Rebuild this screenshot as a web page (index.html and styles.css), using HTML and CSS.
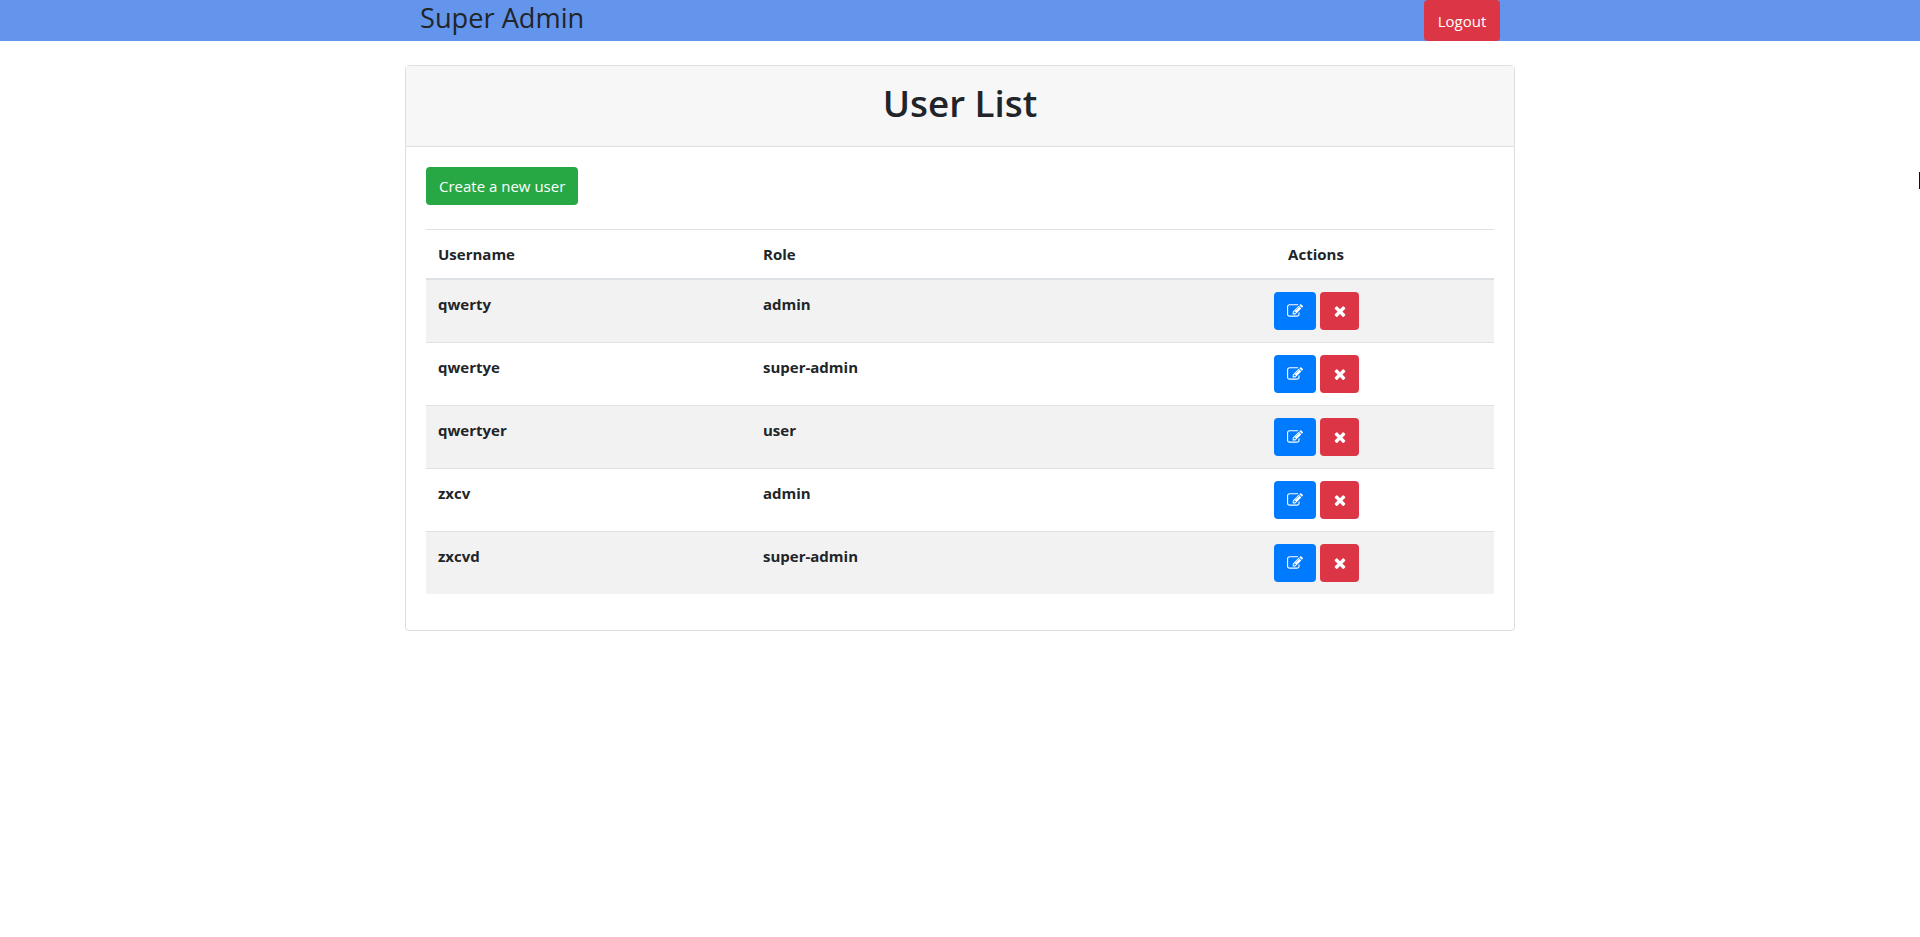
FILE: index.html
```html
<!DOCTYPE html>
<html lang="en">
<head>
  <meta charset="UTF-8" />
  <title>Super Admin</title>
  <link rel="stylesheet" href="styles.css">
</head>
<body>

  <nav class="navbar">
    <div class="navbarInner">
      <span class="brand">Super Admin</span>
      <button class="btn btnRed btnLogout">Logout</button>
    </div>
  </nav>

  <main class="container">
    <section class="card">
      <header class="cardHeader">
        <h1>User List</h1>
      </header>
      <div class="cardBody">
        <button class="btn btnGreen">Create a new user</button>
        <table class="userTable">
          <thead>
            <tr>
              <th class="colName">Username</th>
              <th class="colRole">Role</th>
              <th class="colActions">Actions</th>
            </tr>
          </thead>
          <tbody>
            <tr>
              <td>qwerty</td>
              <td>admin</td>
              <td class="colActions">
                <button class="btn btnBlue btnEdit"><svg viewBox="0 0 1792 1792"><use href="#iconEdit"/></svg></button>
                <button class="btn btnRed btnDelete"><svg viewBox="0 0 1792 1792"><use href="#iconClose"/></svg></button>
              </td>
            </tr>
            <tr>
              <td>qwertye</td>
              <td>super-admin</td>
              <td class="colActions">
                <button class="btn btnBlue btnEdit"><svg viewBox="0 0 1792 1792"><use href="#iconEdit"/></svg></button>
                <button class="btn btnRed btnDelete"><svg viewBox="0 0 1792 1792"><use href="#iconClose"/></svg></button>
              </td>
            </tr>
            <tr>
              <td>qwertyer</td>
              <td>user</td>
              <td class="colActions">
                <button class="btn btnBlue btnEdit"><svg viewBox="0 0 1792 1792"><use href="#iconEdit"/></svg></button>
                <button class="btn btnRed btnDelete"><svg viewBox="0 0 1792 1792"><use href="#iconClose"/></svg></button>
              </td>
            </tr>
            <tr>
              <td>zxcv</td>
              <td>admin</td>
              <td class="colActions">
                <button class="btn btnBlue btnEdit"><svg viewBox="0 0 1792 1792"><use href="#iconEdit"/></svg></button>
                <button class="btn btnRed btnDelete"><svg viewBox="0 0 1792 1792"><use href="#iconClose"/></svg></button>
              </td>
            </tr>
            <tr>
              <td>zxcvd</td>
              <td>super-admin</td>
              <td class="colActions">
                <button class="btn btnBlue btnEdit"><svg viewBox="0 0 1792 1792"><use href="#iconEdit"/></svg></button>
                <button class="btn btnRed btnDelete"><svg viewBox="0 0 1792 1792"><use href="#iconClose"/></svg></button>
              </td>
            </tr>
          </tbody>
        </table>
      </div>
    </section>
  </main>

  <div class="textCursor"></div>

  <svg class="iconDefs" aria-hidden="true">
    <symbol id="iconEdit" viewBox="0 0 1792 1792">
      <path fill="currentColor" d="M888 1184l116-116-152-152-116 116v56h96v96h56zm440-720q-16-16-33 1l-350 350q-17 17-1 33t33-1l350-350q17-17 1-33zm80 594v190q0 119-84.500 203.500t-203.500 84.500h-832q-119 0-203.500-84.500t-84.500-203.500v-832q0-119 84.500-203.500t203.500-84.500h832q63 0 117 25 15 7 18 23 3 17-9 29l-49 49q-14 14-32 8-23-6-45-6h-832q-66 0-113 47t-47 113v832q0 66 47 113t113 47h832q66 0 113-47t47-113v-126q0-13 9-22l64-64q15-15 35-7t20 29zm-96-738l288 288-672 672h-288v-288zm444 132l-92 92-288-288 92-92q28-28 68-28t68 28l152 152q28 28 28 68t-28 68z"/>
    </symbol>
    <symbol id="iconClose" viewBox="0 0 1792 1792">
      <path fill="currentColor" d="M1490 1322q0 40-28 68l-136 136q-28 28-68 28t-68-28l-294-294-294 294q-28 28-68 28t-68-28l-136-136q-28-28-28-68t28-68l294-294-294-294q-28-28-28-68t28-68l136-136q28-28 68-28t68 28l294 294 294-294q28-28 68-28t68 28l136 136q28 28 28 68t-28 68l-294 294 294 294q28 28 28 68z"/>
    </symbol>
  </svg>

</body>
</html>
```

FILE: styles.css
```css
* {
  box-sizing: border-box;
}
body {
  margin: 0;
  background-color: #fff;
  color: #212529;
  font-family: "Open Sans", "Noto Sans", sans-serif;
  font-size: 16px;
  line-height: 1.5;
}
.iconDefs {
  display: none;
}
.textCursor {
  position: fixed;
  top: 172px;
  right: 0;
  width: 1px;
  height: 17px;
  background-color: #111;
}
.navbar {
  height: 41px;
  background-color: #6495ed;
}
.navbarInner {
  width: 1140px;
  margin: 0 auto;
  padding: 0 30px;
  display: flex;
  justify-content: space-between;
}
.brand {
  font-size: 27.2px;
  line-height: 36px;
}
.btn {
  border: 1px solid transparent;
  border-radius: 4px;
  padding: 6px 12px;
  color: #fff;
  font-family: inherit;
  font-size: 15px;
  line-height: 24px;
  height: 38px;
}
.btnRed {
  background-color: #dc3545;
}
.btnGreen {
  background-color: #28a745;
}
.btnBlue {
  background-color: #007bff;
}
.btnLogout {
  width: 76px;
  height: 41px;
  padding: 6px 0;
}
.btnEdit,
.btnDelete {
  padding: 0;
  vertical-align: top;
}
.btnEdit {
  width: 42px;
}
.btnDelete {
  width: 39px;
  margin-left: 1px;
}
.btnEdit svg,
.btnDelete svg {
  display: block;
  width: 16px;
  height: 16px;
  margin: 0 auto;
}
.container {
  width: 1140px;
  margin: 24px auto 0;
  padding: 0 15px;
}
.card {
  border: 1px solid #dfdfdf;
  border-radius: 4px;
}
.cardHeader {
  height: 81px;
  background-color: #f7f7f7;
  border-bottom: 1px solid #dfdfdf;
  display: flex;
  align-items: center;
  justify-content: center;
}
h1 {
  margin: 0 0 6px;
  font-size: 36.8px;
  font-weight: 600;
  line-height: 48px;
}
.cardBody {
  padding: 20px;
}
.userTable {
  width: 100%;
  margin: 24px 0 16px;
  border-collapse: collapse;
  table-layout: fixed;
  font-size: 15px;
  font-weight: 700;
}
.userTable th {
  padding: 13px 12px 12px;
  text-align: left;
  border-top: 1px solid #dee2e6;
  border-bottom: 2px solid #dee2e6;
}
.userTable td {
  padding: 13px 12px 12px;
  height: 63px;
  vertical-align: top;
  border-top: 1px solid #dee2e6;
}
.userTable tbody tr:nth-child(odd) {
  background-color: #f2f2f2;
}
.userTable .colActions {
  text-align: center;
}
.userTable td.colActions {
  padding-top: 12px;
  padding-left: 13px;
}
.colName {
  width: 325px;
}
.colRole {
  width: 387px;
}
```
